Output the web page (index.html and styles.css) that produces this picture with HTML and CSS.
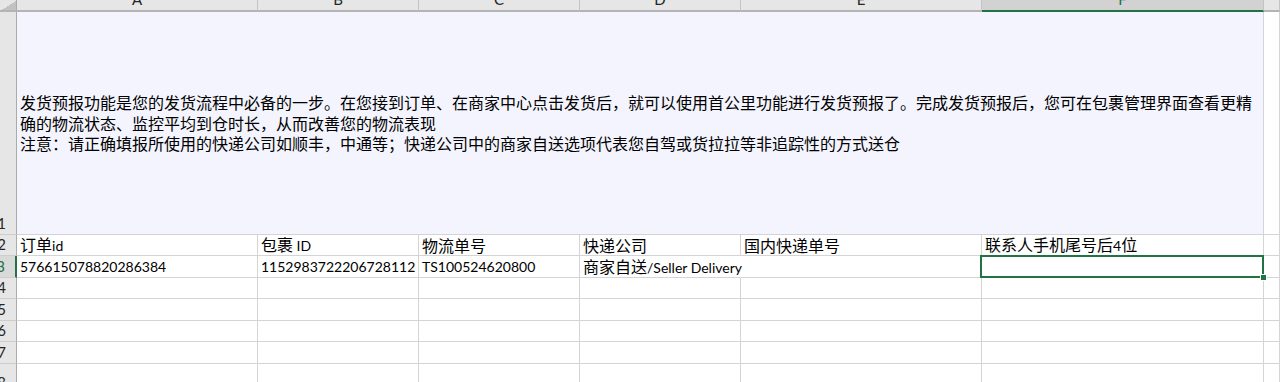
FILE: index.html
```html
<!DOCTYPE html>
<html lang="zh-CN">
<head>
<meta charset="utf-8">
<title>发货预报</title>
<link rel="stylesheet" href="styles.css">
</head>
<body>
<div class="sheet">
  <div class="corner"></div>
  <div class="ch">A</div>
  <div class="ch">B</div>
  <div class="ch">C</div>
  <div class="ch">D</div>
  <div class="ch">E</div>
  <div class="ch sel">F</div>
  <div class="ch"></div>

  <div class="rh">1</div>
  <div class="c note">发货预报功能是您的发货流程中必备的一步。在您接到订单、在商家中心点击发货后，就可以使用首公里功能进行发货预报了。完成发货预报后，您可在包裹管理界面查看更精确的物流状态、监控平均到仓时长，从而改善您的物流表现<br>注意：请正确填报所使用的快递公司如顺丰，中通等；快递公司中的商家自送选项代表您自驾或货拉拉等非追踪性的方式送仓</div>
  <div class="c"></div>

  <div class="rh">2</div>
  <div class="c"><span class="t">订单<span class="en">id</span></span></div>
  <div class="c"><span class="t">包裹 <span class="en">ID</span></span></div>
  <div class="c"><span class="t">物流单号</span></div>
  <div class="c"><span class="t">快递公司</span></div>
  <div class="c"><span class="t">国内快递单号</span></div>
  <div class="c"><span class="t">联系人手机尾号后<span class="en">4</span>位</span></div>
  <div class="c"></div>

  <div class="rh cur">3</div>
  <div class="c"><span class="t en">576615078820286384</span></div>
  <div class="c"><span class="t en">1152983722206728112</span></div>
  <div class="c"><span class="t en">TS100524620800</span></div>
  <div class="c spill"><span class="t">商家自送<span class="en">/Seller Delivery</span></span></div>
  <div class="c"></div>
  <div class="c active"><div class="selbox"></div><div class="handle"></div></div>
  <div class="c"></div>

  <div class="rh">4</div>
  <div class="c"></div><div class="c"></div><div class="c"></div><div class="c"></div><div class="c"></div><div class="c"></div><div class="c"></div>
  <div class="rh">5</div>
  <div class="c"></div><div class="c"></div><div class="c"></div><div class="c"></div><div class="c"></div><div class="c"></div><div class="c"></div>
  <div class="rh">6</div>
  <div class="c"></div><div class="c"></div><div class="c"></div><div class="c"></div><div class="c"></div><div class="c"></div><div class="c"></div>
  <div class="rh">7</div>
  <div class="c"></div><div class="c"></div><div class="c"></div><div class="c"></div><div class="c"></div><div class="c"></div><div class="c"></div>
  <div class="rh">8</div>
  <div class="c"></div><div class="c"></div><div class="c"></div><div class="c"></div><div class="c"></div><div class="c"></div><div class="c"></div>
</div>
</body>
</html>
```

FILE: styles.css
```css
html, body {
  margin: 0;
  padding: 0;
  background: #ffffff;
}
body {
  width: 1280px;
  height: 382px;
  overflow: hidden;
  font-family: "Noto Sans CJK SC", sans-serif;
  color: #000;
}
.sheet {
  display: grid;
  grid-template-columns: 17px 241px 161px 161px 161px 241px 282px 16px;
  grid-template-rows: 12px 223px 21px 22px 21px 22px 21px 22px 30px;
}
.sheet > div {
  box-sizing: border-box;
}
.corner {
  background: #e6e6e6 linear-gradient(to bottom right, transparent 55%, #c2c2c2 55%);
  border-right: 1px solid #ababab;
  border-bottom: 2px solid #b4b4b4;
}
.ch {
  background: #e6e6e6;
  border-right: 1px solid #c4c4c4;
  border-bottom: 2px solid #b4b4b4;
  display: flex;
  justify-content: center;
  align-items: flex-end;
  overflow: hidden;
  font-family: Lato, "Liberation Sans", sans-serif;
  font-size: 15px;
  line-height: 15px;
  color: #262626;
  padding-bottom: 3px;
}
.ch.sel {
  background: #d2d2d2;
  color: #217346;
  border-bottom: 2px solid #217346;
}
.rh {
  background: #e6e6e6;
  border-right: 1px solid #ababab;
  border-bottom: 1px solid #cdcdcd;
  display: flex;
  justify-content: flex-end;
  align-items: flex-end;
  overflow: hidden;
  padding-right: 10px;
  padding-bottom: 1px;
  font-family: Lato, "Liberation Sans", sans-serif;
  font-size: 15px;
  line-height: 19px;
  color: #262626;
}
.rh.cur {
  background: #d9d9d9;
  color: #217346;
  border-right: 2px solid #217346;
}
.c {
  border-right: 1px solid #d4d4d4;
  border-bottom: 1px solid #d4d4d4;
  display: flex;
  align-items: center;
  padding-left: 3px;
  white-space: nowrap;
  font-size: 16px;
  line-height: 20px;
  position: relative;
}
.t {
  white-space: pre;
}
.c.spill {
  border-right-color: transparent;
  overflow: visible;
  z-index: 1;
}
.note {
  grid-column: 2 / 8;
  background: #f3f4fd;
  display: block;
  white-space: normal;
  padding: 0 6px 0 3px;
  line-height: 20.5px;
  align-content: center;
}
.en {
  font-family: Lato, "Liberation Sans", sans-serif;
  font-size: 14px;
}
.selbox {
  position: absolute;
  top: -1px;
  left: -2px;
  right: -1px;
  bottom: -1px;
  border: 2px solid #217346;
}
.handle {
  position: absolute;
  right: -4px;
  bottom: -4px;
  width: 5px;
  height: 5px;
  background: #217346;
  border: 1px solid #ffffff;
  z-index: 2;
}
```
